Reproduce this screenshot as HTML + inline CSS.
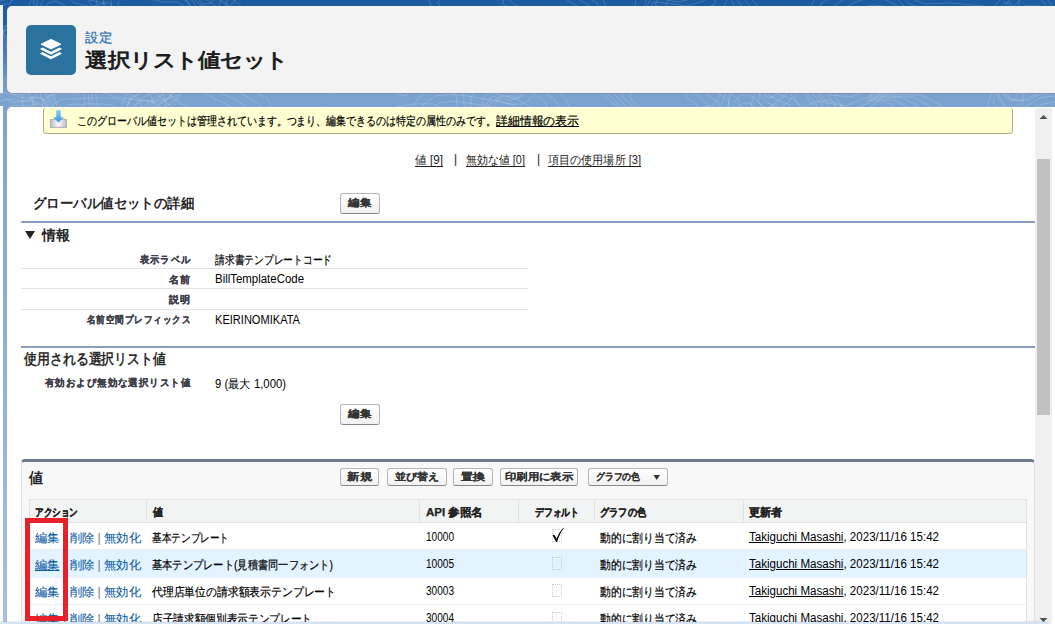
<!DOCTYPE html>
<html><head><meta charset="utf-8">
<style>
*{margin:0;padding:0;box-sizing:border-box}
html,body{width:1055px;height:624px;overflow:hidden}
body{position:relative;font-family:"Liberation Sans",sans-serif;background:linear-gradient(#1c5ca0 0px,#2460a6 25px,#5a89c0 65px,#7ba2cf 93px,#84a9d4 200px,#a9bfdd 624px);color:#000}
.a{position:absolute;white-space:nowrap}
.f{position:absolute;white-space:nowrap;transform-origin:0 0}
#bg2{left:0;top:93px;width:1055px;height:531px;background:linear-gradient(#7ba2cf,#a6bddd)}
#lstrip1{left:0;top:5px;width:3px;height:88px;background:#f3f3f3}
#lstrip2{left:0;top:106px;width:3px;height:518px;background:#fff}
#header{left:7px;top:6px;width:1060px;height:87px;background:#f3f3f3;border-radius:5px;box-shadow:0 1px 0 rgba(120,90,60,.25)}
#icon{left:26px;top:25px;width:50px;height:50px;background:#2b729e;border-radius:5px}
#content{left:7px;top:107px;width:1045px;height:517px;background:#fff;border-radius:5px 0 0 0}
#rstrip{left:1052px;top:107px;width:3px;height:517px;background:#fff}
#scroll{left:1035px;top:108px;width:17px;height:516px;background:#f0f0f0}
#thumb{left:1037px;top:159px;width:13px;height:256px;background:#c1c1c1}
#bstrip{left:0;top:622px;width:1049px;height:3px;background:#d5e3f8;border-radius:0 4px 0 0;box-shadow:0 -1px 0 rgba(0,0,0,.08)}
#msg{left:43px;top:108px;width:970px;height:26px;background:#ffffd1;border:1px solid #aeac85;border-top:none;border-radius:3px 3px 4px 4px}
.u{text-decoration:underline;text-underline-offset:1px}
.td.blue,.blue{color:#0b5aa5;-webkit-text-stroke:0.1px #0b5aa5}
.btn{position:absolute;height:21px;border:1px solid #b5b5b5;border-bottom-color:#888;border-radius:3px;background:linear-gradient(#fff,#f1f1f1)}
.bt{font-size:10px;font-weight:bold;color:#333;-webkit-text-stroke:0.1px #333}
.hline{position:absolute;height:2px;background:#8a9dc0}
.sep{position:absolute;height:1px;background:#e3e3e3}
.lk{font-size:12px;color:#222;text-underline-offset:2px}
.lbl{font-size:10px;font-weight:bold;color:#3e3e4a;letter-spacing:1px;-webkit-text-stroke:0.2px #3e3e4a}
.val{font-size:12px;color:#000;-webkit-text-stroke:0.2px #000}
#panel{left:21px;top:459px;width:1014px;height:170px;background:#f8f8f8;border:1px solid #e0e3e5;border-top:3px solid #6d7a90;border-radius:4px 4px 0 0}
#thead{left:29px;top:499px;width:998px;height:24px;background:#f2f3f3;border:1px solid #e0e3e5}
.th{font-size:11px;font-weight:bold;color:#222;-webkit-text-stroke:0.25px #222}
.colsep{position:absolute;width:1px;background:#e0e3e5}
.row{position:absolute;left:29px;width:998px;background:#fff;border-left:1px solid #e0e3e5;border-right:1px solid #e0e3e5;border-bottom:1px solid #ededed}
.ns{-webkit-text-stroke:0 !important}
.td{font-size:12px;color:#000;-webkit-text-stroke:0.2px currentColor}
.cb{position:absolute;width:10px;height:13px;border:1px dotted #c8c8c8}
#red{left:25px;top:518px;width:43px;height:103px;border:5px solid #e8202a}
</style></head><body>

<svg class="a" style="left:0;top:0" width="1055" height="110"><g fill="none" stroke="#fff" stroke-opacity="0.17" stroke-width="1" stroke-linejoin="round"><path d="M349 73L348 75L345 77L342 77L340 78L339 80L338 83L335 85L331 84L328 83L326 81L322 80L320 78L320 75L323 73L325 71L325 69L324 66L326 64L329 64L332 64L335 64L338 62L342 61L345 62L347 65L347 68L348 70Z"/><path d="M358 73L358 77L353 79L347 80L343 81L342 85L340 91L335 94L329 93L324 89L320 87L314 85L310 82L311 77L315 73L319 70L319 67L318 62L320 58L325 57L330 58L335 58L340 55L347 53L353 55L355 60L355 65L356 69Z"/><path d="M66 32L65 33L66 35L67 38L65 40L61 40L59 39L56 40L53 43L49 44L46 42L45 38L45 36L44 34L43 32L44 29L48 28L51 28L51 27L51 23L53 20L56 19L60 21L62 23L65 23L69 24L71 26L69 29Z"/><path d="M73 32L71 34L73 38L74 43L71 46L65 45L60 44L56 47L51 51L44 52L39 49L38 43L37 39L35 35L33 32L35 28L41 26L47 26L48 23L48 18L51 12L56 10L62 13L66 16L71 17L77 19L81 23L78 28Z"/><path d="M80 32L77 35L80 41L82 47L77 51L68 51L62 50L56 53L48 59L38 61L31 56L30 48L30 42L26 37L23 32L26 26L35 24L43 23L44 20L44 12L48 3L56 1L64 5L70 10L78 11L86 13L91 19L87 26Z"/><path d="M87 32L84 36L87 43L89 52L83 57L72 56L63 55L56 59L46 67L33 69L24 63L22 53L22 45L17 39L13 32L17 25L29 21L39 21L41 16L40 6L46 -5L56 -8L67 -3L74 3L84 5L95 8L101 15L96 25Z"/><path d="M94 32L90 38L94 46L97 56L89 63L75 62L65 60L56 65L44 74L28 78L17 70L14 58L14 48L8 40L3 32L8 23L22 19L34 18L37 13L37 -0L43 -13L56 -17L69 -10L78 -3L90 -0L104 3L111 12L105 23Z"/><path d="M67 120L64 126L58 129L53 132L50 135L45 138L39 136L34 132L32 129L27 131L20 134L14 133L12 129L13 124L13 120L9 116L7 110L11 106L19 105L26 106L30 106L34 104L39 104L42 108L43 112L45 114L52 114L62 115Z"/><path d="M80 120L76 128L67 133L61 137L56 141L49 145L41 142L34 136L30 133L25 136L15 139L5 138L3 132L5 126L4 120L-1 114L-4 106L2 100L13 99L22 101L28 100L34 98L41 98L45 103L46 109L49 111L60 111L73 114Z"/><path d="M93 120L88 130L77 136L68 141L62 147L54 151L43 149L34 141L29 137L22 140L9 145L-3 143L-7 135L-4 127L-4 120L-11 112L-15 102L-8 95L6 93L19 95L27 94L34 91L43 91L48 98L50 106L54 109L67 108L84 112Z"/><path d="M432 139L419 147L414 153L413 162L409 170L398 174L386 172L376 170L367 169L358 168L350 164L345 158L338 153L324 148L308 139L301 126L311 115L332 112L351 115L363 118L369 117L376 115L383 114L393 112L406 110L424 109L439 116L442 127Z"/><path d="M442 139L428 148L421 156L420 166L415 176L402 181L388 179L376 175L365 174L354 173L345 169L339 162L331 156L315 150L296 139L287 123L299 110L323 107L346 110L360 114L368 113L376 110L385 109L396 107L412 104L433 104L451 111L454 125Z"/><path d="M1076 50L1071 53L1067 55L1066 58L1064 61L1060 61L1056 59L1053 57L1051 58L1046 62L1039 64L1035 62L1034 58L1034 54L1033 50L1032 47L1035 44L1041 43L1047 44L1049 44L1050 41L1053 37L1057 36L1061 39L1063 41L1067 42L1073 43L1077 46Z"/><path d="M1088 50L1080 55L1075 58L1072 62L1070 66L1064 67L1057 64L1053 61L1050 63L1042 68L1032 71L1025 68L1023 61L1023 56L1022 50L1021 45L1026 40L1035 39L1044 41L1047 40L1049 36L1053 30L1060 29L1065 32L1068 36L1075 37L1084 39L1090 44Z"/><path d="M1100 50L1090 57L1082 61L1079 66L1075 71L1067 73L1059 69L1053 65L1048 67L1038 74L1025 78L1015 74L1013 65L1013 57L1011 50L1010 43L1016 37L1029 35L1040 38L1045 37L1047 31L1053 23L1062 22L1068 26L1074 31L1082 33L1094 35L1102 42Z"/><path d="M1111 50L1099 58L1089 64L1085 70L1081 77L1071 78L1060 73L1053 68L1047 71L1035 80L1018 85L1005 80L1002 69L1003 59L1001 50L999 41L1007 33L1023 31L1037 34L1043 34L1046 26L1053 16L1064 15L1072 20L1079 26L1090 28L1105 31L1115 39Z"/><path d="M1123 50L1109 60L1097 66L1092 74L1086 82L1075 84L1062 78L1053 72L1046 76L1031 86L1010 92L995 86L992 73L993 61L990 50L988 39L997 30L1016 28L1033 31L1041 30L1045 21L1053 10L1066 7L1076 14L1084 21L1097 24L1115 27L1127 37Z"/><path d="M739 11L743 17L745 25L744 34L739 42L729 46L717 44L707 37L701 31L697 28L690 28L681 28L672 24L667 18L665 11L666 4L670 -3L677 -7L686 -10L693 -12L699 -16L707 -21L717 -22L726 -18L730 -11L731 -3L732 2L735 6Z"/><path d="M747 11L751 19L754 29L753 39L747 49L734 54L719 52L707 43L700 35L694 32L686 32L674 32L664 27L657 20L655 11L656 2L661 -6L670 -11L680 -15L689 -18L697 -23L707 -28L720 -30L730 -25L735 -16L736 -7L737 0L741 5Z"/><path d="M755 11L760 21L763 32L762 45L754 57L739 63L722 60L707 50L699 40L692 36L681 36L668 36L655 31L647 22L644 11L646 0L652 -9L663 -16L675 -20L686 -23L695 -29L707 -36L722 -38L735 -32L741 -21L742 -10L743 -2L748 4Z"/><path d="M762 11L769 22L772 35L771 50L762 64L745 71L724 68L707 56L697 45L689 40L677 40L661 40L647 34L637 24L634 11L636 -1L643 -13L656 -20L670 -25L682 -29L693 -36L707 -44L724 -47L739 -40L746 -26L748 -14L749 -4L755 3Z"/><path d="M524 84L523 91L519 97L511 100L501 99L493 96L490 98L486 106L477 113L468 112L464 105L464 98L463 93L458 89L453 84L454 79L457 74L460 68L462 62L468 56L478 57L486 65L489 73L492 74L500 70L512 68L522 71L525 77Z"/><path d="M535 84L534 93L529 100L519 105L505 103L495 100L491 102L486 112L475 121L463 121L457 111L457 101L456 95L449 91L444 84L444 77L449 71L452 64L455 55L463 48L475 49L486 60L490 70L494 71L504 66L520 63L533 67L537 75Z"/><path d="M1043 73L1045 75L1045 79L1043 81L1039 83L1035 83L1032 84L1029 85L1025 86L1021 85L1018 83L1015 81L1012 79L1011 76L1012 73L1015 70L1018 69L1019 67L1019 63L1021 60L1024 58L1029 58L1033 59L1037 60L1040 62L1042 65L1042 68L1042 70Z"/><path d="M1051 73L1054 77L1054 82L1051 86L1045 88L1039 89L1034 90L1029 93L1022 94L1016 92L1011 89L1007 86L1003 82L1001 77L1003 73L1008 69L1012 67L1013 63L1013 58L1016 52L1022 49L1029 50L1035 51L1041 53L1046 56L1049 60L1049 65L1049 69Z"/><path d="M1058 73L1062 79L1064 86L1059 91L1050 93L1042 94L1036 96L1029 100L1020 101L1012 99L1005 95L1000 90L994 85L992 79L994 73L1001 68L1006 64L1008 60L1008 53L1012 45L1019 41L1029 42L1037 44L1045 47L1052 50L1056 56L1057 62L1056 68Z"/><path d="M184 142L176 147L170 152L165 155L160 158L153 159L148 158L143 161L135 168L122 175L108 175L101 167L102 156L107 148L110 142L113 136L118 133L125 131L129 128L130 122L134 114L143 109L152 110L159 116L165 120L173 123L183 127L188 134Z"/><path d="M195 142L185 149L177 154L171 159L164 162L156 163L149 162L143 165L133 175L117 183L99 183L91 173L92 160L97 149L101 142L105 135L112 130L120 128L125 125L127 117L132 107L143 100L154 102L163 109L170 115L181 118L193 123L199 132Z"/><path d="M205 142L194 150L184 157L177 162L169 167L159 167L150 166L143 170L131 181L111 192L91 192L80 180L82 164L88 151L93 142L98 134L106 128L116 125L122 121L124 112L130 99L143 92L157 94L167 103L176 110L188 113L203 119L211 130Z"/><path d="M216 142L202 152L191 159L183 166L173 171L162 172L151 170L143 175L129 188L106 200L82 200L69 187L71 168L79 153L85 142L90 132L100 126L111 122L118 118L121 107L128 92L143 83L159 86L171 96L181 104L196 109L213 115L222 128Z"/><path d="M893 106L892 112L885 115L880 118L878 123L873 128L866 126L860 120L857 115L852 118L842 123L832 123L831 117L837 110L842 106L839 102L835 97L836 91L843 90L850 90L854 87L860 82L867 80L872 87L870 96L867 101L873 101L885 101Z"/><path d="M906 106L903 114L894 119L887 123L884 130L878 136L868 133L860 125L856 119L849 123L835 129L822 129L821 120L829 111L836 106L832 101L826 93L827 86L837 84L846 84L852 80L860 73L870 71L876 80L873 93L870 100L878 99L894 100Z"/><path d="M918 106L915 116L903 122L895 127L891 136L883 143L870 141L860 130L855 122L846 127L829 135L812 135L810 124L821 113L829 106L825 100L817 90L819 81L831 78L843 79L850 74L860 64L873 62L880 73L877 89L873 98L882 97L903 98Z"/><path d="M930 106L927 118L912 125L902 132L897 142L888 151L872 148L860 134L854 126L844 131L823 142L802 141L800 128L813 114L823 106L817 99L808 87L810 76L825 73L839 73L848 67L860 55L876 52L885 66L881 86L876 96L887 96L913 97Z"/><path d="M942 106L938 120L921 129L909 136L904 149L893 159L874 155L860 139L853 129L841 136L816 148L792 147L789 132L805 115L817 106L810 97L799 83L802 71L819 67L835 67L846 60L860 47L878 43L889 59L884 82L878 94L892 94L922 95Z"/><path d="M783 86L780 87L780 88L781 90L780 92L778 93L776 94L774 96L770 98L766 97L765 94L766 90L766 88L765 87L762 86L762 84L764 82L766 81L767 80L769 78L771 76L774 77L776 78L778 78L782 77L786 78L788 80L787 83Z"/><path d="M790 86L786 88L785 90L786 93L785 96L782 98L778 101L774 105L767 108L761 106L758 101L760 94L761 90L758 88L753 86L752 82L756 79L760 77L763 75L765 72L769 69L774 70L778 72L782 72L789 71L796 72L800 76L797 82Z"/><path d="M797 86L791 89L791 92L792 97L790 101L785 104L780 108L774 113L764 118L755 116L751 107L753 98L755 93L751 90L744 86L743 80L748 76L754 74L758 70L761 65L767 62L774 63L780 65L786 66L795 65L807 65L812 71L807 80Z"/><path d="M1016 76L1018 78L1016 80L1014 80L1013 82L1013 86L1010 89L1007 89L1004 85L1003 82L1002 81L998 81L995 80L996 78L999 76L1000 75L998 73L996 69L997 67L1001 67L1004 68L1007 68L1010 65L1014 65L1015 68L1014 72L1012 74L1013 75Z"/><path d="M1024 76L1027 80L1024 83L1020 84L1018 87L1018 94L1014 100L1007 99L1002 92L1000 86L998 85L991 85L986 84L987 79L993 76L994 74L991 70L987 64L990 60L997 60L1002 62L1007 61L1012 57L1019 56L1022 61L1019 68L1016 73L1018 74Z"/><path d="M1032 76L1037 81L1032 85L1025 88L1023 92L1023 102L1017 111L1007 110L999 100L997 91L994 89L985 89L977 87L979 81L986 76L989 73L983 67L978 59L982 53L992 53L1001 56L1007 54L1015 48L1025 46L1030 54L1025 65L1020 71L1023 73Z"/><path d="M212 27L205 36L194 40L185 44L181 49L178 58L170 65L159 69L147 68L134 66L123 62L116 53L118 43L125 33L129 27L126 22L120 13L118 3L125 -5L136 -8L148 -10L159 -11L170 -10L179 -6L186 1L192 7L200 12L209 19Z"/><path d="M222 27L214 37L201 43L191 47L186 54L181 64L172 73L159 77L144 76L130 74L116 69L108 58L110 45L118 35L123 27L119 21L112 10L111 -2L119 -11L132 -15L146 -17L159 -18L172 -17L183 -12L191 -4L198 3L208 9L219 17Z"/><path d="M233 27L224 39L208 46L196 50L190 58L185 70L174 80L159 85L142 84L125 82L109 75L100 64L102 48L112 36L117 27L113 19L104 7L103 -7L112 -17L128 -22L143 -24L159 -26L174 -25L187 -18L197 -9L205 -1L216 6L229 15Z"/><path d="M243 27L233 40L215 48L201 53L195 62L189 75L176 87L159 93L139 92L120 89L102 82L92 69L94 51L105 37L111 27L106 18L97 4L95 -12L106 -24L123 -29L141 -32L159 -33L176 -32L192 -25L202 -14L211 -5L225 3L239 13Z"/><path d="M254 27L242 42L221 51L206 57L199 67L193 81L179 95L159 101L137 100L115 97L95 89L83 74L86 54L98 38L106 27L100 17L89 2L87 -17L99 -30L119 -36L139 -39L159 -41L179 -39L196 -31L207 -19L218 -9L233 0L249 12Z"/><path d="M524 149L521 158L512 165L501 169L491 171L485 176L478 183L468 191L455 195L441 192L430 186L422 177L419 167L420 157L426 149L430 142L431 135L431 126L435 117L444 110L456 109L468 110L479 112L490 114L501 117L511 123L517 131L522 140Z"/><path d="M534 149L530 160L520 168L506 172L495 175L488 180L480 190L468 199L452 203L436 200L423 192L414 182L410 171L412 159L418 149L424 141L425 133L425 122L429 111L439 103L454 101L468 103L481 105L494 107L507 111L518 118L526 128L531 138Z"/><path d="M544 149L540 162L528 171L512 176L499 179L491 185L482 196L468 206L450 211L431 208L416 199L406 187L401 174L403 160L411 149L417 140L418 131L418 118L423 105L435 96L452 94L468 96L483 99L498 101L513 105L526 114L535 124L541 136Z"/><path d="M553 149L549 163L536 174L518 180L503 183L494 190L484 202L468 214L447 219L426 216L409 206L398 192L392 177L395 162L403 149L410 139L412 128L411 114L417 99L431 89L450 87L468 89L485 92L502 95L519 100L533 109L543 121L550 135Z"/><path d="M524 18L519 24L510 29L506 34L506 43L502 53L491 54L480 46L475 37L470 35L460 38L447 38L442 32L444 24L446 18L442 11L438 2L443 -5L457 -5L468 -2L474 -3L480 -10L491 -17L500 -14L504 -5L503 4L508 7L518 11Z"/><path d="M534 18L529 26L518 32L513 38L513 49L507 61L494 63L480 53L473 41L467 39L455 42L440 43L433 35L436 26L438 18L432 9L428 -2L434 -10L451 -11L465 -6L473 -7L480 -17L493 -25L505 -22L509 -10L509 0L515 5L527 10Z"/><path d="M100 70L99 76L89 79L82 81L83 88L85 103L78 114L65 113L56 101L52 90L46 88L35 89L26 85L29 77L37 70L38 66L32 58L29 48L38 44L51 48L59 52L65 46L75 35L90 31L98 39L95 52L90 61L94 65Z"/><path d="M109 70L107 78L95 81L86 83L88 92L90 110L81 125L65 123L54 108L49 95L42 92L27 93L17 88L20 78L30 70L32 64L24 55L20 43L31 38L47 42L58 47L65 40L78 26L96 21L105 31L102 48L96 59L101 64Z"/><path d="M117 70L115 79L101 84L90 86L92 97L95 118L84 136L65 134L51 115L46 100L37 97L20 98L8 91L12 80L24 70L25 63L15 52L12 38L24 31L44 37L57 42L65 34L80 18L102 11L113 23L109 43L103 56L107 63Z"/><path d="M126 70L124 81L107 86L95 89L97 101L100 126L87 147L65 144L49 123L43 105L33 101L13 102L-2 95L3 81L17 70L19 62L7 49L3 32L18 25L41 32L55 38L65 28L83 9L108 2L121 16L116 39L109 54L114 62Z"/><path d="M113 118L106 121L101 123L101 125L101 129L99 134L95 137L89 138L83 139L77 137L73 133L73 128L74 123L73 121L68 118L64 114L63 109L68 105L75 104L81 105L85 104L89 104L93 104L98 104L104 104L111 105L117 108L118 113Z"/><path d="M123 118L112 122L106 124L105 128L106 134L103 140L97 145L89 147L80 147L72 145L67 139L67 132L68 126L67 122L60 118L53 112L53 105L60 100L69 99L77 99L83 98L89 98L95 98L101 98L109 98L120 99L129 103L130 111Z"/><path d="M133 118L119 123L111 126L110 131L110 139L107 147L99 152L89 155L78 155L67 153L61 145L60 136L63 128L61 123L52 118L43 110L42 101L51 95L63 93L74 94L81 93L89 92L97 92L105 93L115 93L129 94L140 99L142 109Z"/><path d="M142 118L126 125L116 128L114 134L115 143L111 153L101 160L89 163L75 164L62 160L54 152L54 140L57 130L54 124L44 118L33 108L32 97L43 90L58 88L70 88L80 87L89 86L98 86L109 87L121 87L138 88L151 95L154 107Z"/><path d="M152 118L133 126L121 130L119 137L120 148L115 160L104 168L89 171L73 172L58 168L48 158L47 144L51 132L48 125L35 118L23 106L22 93L34 85L52 82L67 83L78 82L89 80L100 80L112 81L127 81L146 83L163 91L166 105Z"/><path d="M1017 21L1018 24L1013 26L1008 26L1006 27L1005 31L1003 34L999 34L996 31L993 30L987 32L980 33L975 30L978 24L986 21L990 19L990 17L989 14L990 12L993 12L996 11L999 8L1004 3L1010 3L1013 7L1011 13L1010 17L1012 18Z"/><path d="M1027 21L1028 26L1021 29L1013 29L1009 31L1009 36L1005 41L999 41L994 37L989 36L981 38L969 39L962 34L967 26L978 21L986 18L985 16L983 11L985 8L990 7L995 6L999 1L1007 -6L1016 -7L1020 -0L1018 9L1016 15L1020 17Z"/><path d="M775 127L779 132L783 140L781 146L772 148L761 145L754 140L750 139L746 142L740 144L734 143L729 140L723 137L717 133L714 127L719 122L728 119L735 118L737 115L738 108L743 103L750 103L756 108L760 112L764 114L769 116L772 119L773 123Z"/><path d="M783 127L789 134L795 144L792 153L779 156L765 151L755 145L750 144L744 147L736 149L729 148L722 144L714 141L706 135L702 127L709 120L721 116L730 115L732 110L734 102L741 95L750 95L758 101L763 107L769 109L776 112L780 116L781 122Z"/><path d="M791 127L799 136L806 148L803 159L787 163L768 157L757 149L750 148L743 152L733 155L723 153L715 149L705 144L694 137L690 127L698 118L713 114L725 112L728 106L730 95L738 87L750 87L760 95L766 102L773 105L782 108L788 113L789 121Z"/><path d="M800 127L809 138L817 152L813 166L794 170L772 162L758 153L750 152L741 157L729 161L718 158L708 153L696 147L683 139L678 127L687 116L706 111L719 108L723 101L726 89L736 79L750 79L762 88L770 96L778 100L788 104L795 111L797 119Z"/><path d="M808 127L819 139L829 156L824 172L802 177L776 168L759 158L750 156L740 162L726 166L713 164L701 157L687 151L672 141L666 127L677 114L698 108L714 105L719 97L722 82L733 70L750 71L764 81L773 91L783 96L795 100L803 108L805 118Z"/><path d="M399 52L401 54L401 56L399 57L399 59L398 62L395 64L392 63L390 60L389 57L387 57L383 58L380 57L381 54L384 52L386 51L385 50L384 47L385 45L387 45L390 45L392 43L395 40L399 40L401 44L398 48L396 51L396 51Z"/><path d="M406 52L410 55L408 58L406 61L405 65L403 71L399 75L392 73L388 66L386 62L382 61L375 63L370 60L371 56L378 52L381 50L379 48L377 43L379 40L383 39L388 38L392 34L399 29L406 30L408 36L404 45L399 50L400 51Z"/><path d="M412 52L418 57L416 61L412 65L411 70L409 79L402 85L392 82L386 73L383 66L378 66L367 67L359 64L362 57L371 52L376 49L373 45L370 39L373 34L379 33L386 31L392 26L402 19L413 19L416 29L409 42L402 48L404 50Z"/><path d="M419 52L426 58L424 64L418 69L417 76L414 88L405 96L392 92L384 79L381 70L373 70L359 72L349 68L352 59L365 52L371 49L368 43L363 35L367 28L376 26L384 25L392 17L405 8L419 9L423 22L415 38L405 47L407 50Z"/><path d="M1074 57L1065 61L1068 67L1074 77L1071 86L1059 87L1048 84L1040 85L1030 91L1017 93L1012 84L1017 71L1021 63L1013 61L996 57L988 47L995 40L1009 38L1019 36L1023 29L1030 21L1040 22L1048 31L1052 38L1060 37L1076 34L1090 38L1087 48Z"/><path d="M1082 57L1070 62L1074 69L1082 82L1078 93L1063 94L1050 90L1040 92L1027 99L1012 101L1005 90L1011 74L1017 65L1007 62L987 57L976 45L985 36L1003 34L1014 31L1019 22L1027 13L1040 14L1049 25L1054 34L1065 33L1085 29L1101 34L1098 46Z"/><path d="M1089 57L1076 63L1081 72L1089 87L1084 99L1068 101L1052 96L1040 98L1025 107L1007 109L999 96L1006 77L1013 67L1001 63L977 57L964 43L975 32L996 29L1009 26L1015 16L1025 5L1040 6L1051 19L1057 30L1069 28L1093 24L1112 30L1109 44Z"/><path d="M1097 57L1082 64L1087 74L1097 92L1091 106L1072 107L1054 102L1040 105L1023 115L1002 118L993 102L1001 81L1008 68L995 64L967 57L952 41L965 29L989 25L1004 22L1011 10L1022 -3L1040 -2L1053 14L1059 25L1074 24L1101 19L1123 26L1120 43Z"/><path d="M1105 57L1087 65L1094 76L1105 96L1098 113L1076 114L1055 108L1040 111L1020 123L997 126L986 108L996 84L1004 70L989 66L957 57L940 39L954 25L982 21L999 17L1007 3L1020 -11L1040 -10L1054 8L1062 21L1078 19L1109 14L1135 21L1131 41Z"/><path d="M696 -23L699 -12L694 -2L679 2L661 -1L651 -2L647 6L638 20L624 26L611 20L606 8L603 -1L594 -6L583 -13L581 -23L588 -32L596 -39L597 -48L599 -60L610 -68L626 -63L638 -52L645 -45L654 -48L671 -54L687 -53L695 -44L695 -33Z"/><path d="M706 -23L709 -10L704 1L686 6L665 3L654 2L648 11L638 27L621 35L607 27L601 13L597 3L586 -3L573 -12L571 -23L580 -33L588 -41L590 -52L593 -67L605 -76L624 -70L638 -57L646 -49L657 -53L677 -60L696 -58L705 -48L705 -35Z"/><path d="M716 -23L720 -9L714 5L693 11L669 7L656 6L650 16L638 34L619 43L602 35L595 18L590 6L578 -1L564 -10L561 -23L571 -35L581 -44L583 -57L586 -73L600 -83L622 -77L638 -62L647 -53L660 -57L682 -65L705 -64L715 -51L715 -36Z"/><path d="M727 -23L730 -7L723 9L700 15L673 11L658 9L651 21L638 42L616 52L597 42L590 24L584 10L570 2L554 -8L551 -23L562 -36L573 -47L576 -61L579 -80L595 -91L620 -85L638 -67L648 -56L662 -62L688 -71L713 -69L725 -55L725 -38Z"/><path d="M547 106L546 110L543 114L540 117L537 120L533 122L527 120L523 117L521 114L518 114L513 116L506 116L501 114L497 111L496 106L496 102L499 97L505 96L513 96L518 98L520 97L523 95L527 92L532 92L535 94L538 97L542 99L545 102Z"/><path d="M558 106L556 112L552 117L548 122L544 126L537 129L529 127L523 121L519 117L516 117L509 120L499 121L491 118L486 113L483 106L483 99L488 93L497 91L508 92L515 94L519 93L523 89L529 86L536 86L541 89L545 93L550 96L556 101Z"/><path d="M569 106L566 114L561 120L556 127L550 133L541 136L531 133L523 126L518 121L514 121L504 124L492 125L481 122L474 115L471 106L471 97L477 89L490 86L503 87L513 90L518 89L523 84L531 80L540 80L546 84L552 88L559 93L566 99Z"/><path d="M37 13L36 16L36 19L36 24L36 30L31 33L24 31L18 25L15 22L11 24L3 27L-3 26L-5 21L-2 16L-0 13L-0 9L1 6L4 4L9 4L11 2L13 -4L18 -11L26 -13L31 -7L31 1L29 6L30 8L34 10Z"/><path d="M45 13L44 17L43 22L44 29L44 37L36 42L26 38L18 31L14 26L8 29L-3 33L-13 31L-15 25L-11 18L-8 13L-8 8L-7 3L-1 1L5 -0L8 -3L11 -12L18 -21L29 -24L36 -16L36 -5L33 3L36 6L41 8Z"/><path d="M956 43L943 53L927 59L914 61L905 63L898 65L892 68L884 74L873 83L856 89L839 87L832 75L836 61L843 50L845 43L841 35L839 26L844 18L852 12L862 8L873 5L884 6L894 11L900 17L908 20L923 20L942 22L957 30Z"/><path d="M970 43L954 55L934 61L919 64L909 67L901 69L893 72L884 79L871 90L850 97L831 95L823 81L828 64L836 51L838 43L833 34L831 23L836 13L847 6L858 1L871 -2L884 -1L896 5L903 13L912 16L930 15L953 18L970 28Z"/><path d="M983 43L965 57L942 64L925 68L913 70L903 73L895 77L884 85L868 97L845 106L823 102L813 87L819 67L828 53L831 43L825 33L823 20L829 9L841 1L854 -5L869 -9L884 -8L897 -1L906 8L917 12L936 11L963 14L983 26Z"/><path d="M996 43L975 59L950 67L930 71L917 74L906 77L896 82L884 91L866 104L840 114L815 110L804 92L810 70L821 54L823 43L818 31L815 17L821 4L835 -5L850 -12L867 -16L884 -15L899 -6L909 4L921 8L943 7L974 10L996 23Z"/><path d="M1009 43L986 61L957 70L935 74L920 78L908 81L897 86L884 96L864 112L835 123L806 118L794 98L801 74L814 55L816 43L810 30L807 14L814 -0L829 -10L846 -18L865 -23L884 -22L901 -12L912 -1L925 4L950 3L984 6L1009 21Z"/><path d="M844 138L839 144L832 148L826 151L823 156L819 162L813 168L804 170L796 168L788 165L779 162L771 158L766 152L766 145L768 138L770 132L772 126L776 121L783 118L791 117L798 116L804 113L813 109L824 108L833 111L839 117L843 124L845 131Z"/><path d="M853 138L847 146L838 151L831 154L827 160L823 168L815 175L804 177L793 175L783 172L773 168L763 163L757 156L756 147L759 138L761 131L764 123L769 116L778 113L788 112L796 111L804 107L815 102L828 100L840 104L847 112L852 121L855 129Z"/><path d="M699 112L691 116L680 118L676 119L679 126L680 137L674 145L664 144L656 139L650 134L643 132L638 128L639 121L645 115L646 112L640 107L631 100L631 92L640 89L651 92L658 93L664 89L672 85L680 86L685 92L687 98L692 101L698 106Z"/><path d="M710 112L699 118L685 120L680 121L684 131L685 145L677 155L664 154L654 147L646 141L637 138L630 132L632 124L639 116L641 112L632 106L622 96L621 86L634 82L648 86L657 87L664 83L674 77L685 78L691 86L694 93L700 98L708 104Z"/><path d="M720 112L707 119L690 121L684 124L688 135L690 153L680 165L664 163L651 155L641 148L631 144L623 137L625 126L633 117L636 112L625 105L612 92L612 80L627 76L644 80L655 82L664 76L677 69L690 71L697 80L700 89L708 95L718 102Z"/><path d="M730 112L715 121L695 123L687 126L692 139L694 160L683 174L664 173L649 162L637 154L625 149L615 142L617 129L628 118L631 112L618 104L602 89L602 74L620 69L640 74L654 76L664 70L679 62L694 63L703 74L707 85L716 92L728 100Z"/><path d="M741 112L723 122L699 125L691 128L697 143L699 168L685 184L664 183L647 170L633 161L619 155L608 146L610 132L622 119L626 112L611 102L593 85L593 68L613 63L637 68L652 71L664 63L681 54L699 56L709 68L714 81L724 89L738 99Z"/><path d="M234 130L219 136L207 139L203 142L203 149L201 158L194 166L183 171L170 176L153 178L139 172L135 160L142 146L151 136L153 130L150 124L147 117L150 110L157 105L165 100L173 94L183 89L196 89L206 94L215 99L226 104L237 110L242 120Z"/><path d="M244 130L226 138L212 141L207 144L207 153L204 163L196 172L183 179L167 185L148 187L131 181L126 165L134 149L144 137L148 130L143 123L140 114L144 106L152 100L161 95L171 87L183 81L198 81L211 86L221 93L234 99L247 107L253 118Z"/><path d="M254 130L233 139L216 142L210 147L211 156L208 169L198 179L183 187L164 194L142 197L123 189L117 171L126 151L138 138L142 130L136 122L133 111L137 102L147 95L158 89L168 80L183 73L200 73L215 79L228 88L242 94L258 103L264 116Z"/><path d="M264 130L240 140L221 144L214 149L214 160L211 174L200 186L183 195L162 203L136 206L114 197L108 177L118 154L132 139L136 130L130 121L126 109L131 98L142 91L154 83L166 73L183 65L203 64L220 72L234 82L250 89L268 99L275 114Z"/><path d="M159 99L148 106L148 113L154 126L153 140L138 142L120 130L111 117L105 118L91 129L72 136L60 130L59 118L59 108L53 99L49 88L60 80L82 81L98 86L100 82L100 64L111 48L126 47L135 61L137 73L144 78L158 81L166 89Z"/><path d="M168 99L156 107L154 115L162 131L161 147L143 150L121 136L111 121L104 122L88 135L65 143L51 136L50 121L50 110L42 99L38 86L51 77L77 78L95 84L98 79L98 58L111 38L129 38L139 53L142 69L151 74L167 78L176 87Z"/><path d="M177 99L163 108L161 118L170 136L169 155L148 158L123 141L111 124L103 125L84 141L58 150L42 141L40 125L40 111L31 99L26 84L41 73L71 75L93 82L96 75L96 51L111 29L132 28L143 46L147 64L157 70L175 75L186 86Z"/><path d="M230 -22L230 -17L225 -14L220 -12L217 -8L215 -2L210 4L203 4L197 -2L194 -8L190 -10L183 -10L175 -12L171 -17L173 -22L175 -27L176 -32L178 -37L185 -40L193 -38L199 -35L203 -37L209 -42L218 -46L225 -44L228 -38L227 -31L228 -27Z"/><path d="M239 -22L239 -16L233 -11L226 -8L222 -4L220 4L213 12L203 12L195 5L191 -3L186 -6L176 -6L166 -9L161 -15L163 -22L166 -29L167 -35L170 -42L179 -46L190 -43L198 -40L203 -41L211 -49L223 -54L233 -51L236 -43L235 -34L236 -28Z"/><path d="M248 -22L248 -14L240 -8L231 -5L227 1L224 11L216 21L203 21L193 12L188 2L182 -2L170 -2L156 -5L151 -13L153 -22L157 -30L159 -39L162 -47L173 -51L186 -48L196 -44L203 -46L213 -55L228 -62L240 -59L244 -48L243 -37L245 -30Z"/><path d="M258 -22L257 -13L248 -6L237 -1L231 5L228 18L218 29L203 30L191 19L185 7L178 2L163 2L147 -2L140 -11L144 -22L148 -32L150 -42L154 -52L166 -57L183 -54L195 -48L203 -51L214 -62L232 -70L248 -66L253 -53L251 -40L253 -31Z"/></g></svg>
<div class="a" id="lstrip1"></div>
<div class="a" id="lstrip2"></div>
<div class="a" id="header"></div>
<div class="a" id="icon"><svg width="50" height="50" viewBox="0 0 50 50"><g fill="#fff" stroke="#fff" stroke-width="0.8" stroke-linejoin="round"><path d="M25 14.3 L35 19.2 L25 24.1 L15 19.2 Z"/><path d="M14.6 24 L16.6 23 L25 27.2 L33.4 23 L35.4 24 L25 29.3 Z"/><path d="M14.6 28.6 L16.6 27.6 L25 31.8 L33.4 27.6 L35.4 28.6 L25 33.9 Z"/></g></svg></div>
<div class="f" style="left:85px;top:29px;font-size:13px;color:#1f6bb0;-webkit-text-stroke:0.2px #1f6bb0;--w:27">設定</div>
<div class="f" style="left:85px;top:47px;font-size:20px;color:#1b1b1b;-webkit-text-stroke:0.9px #1b1b1b;--w:203">選択リスト値セット</div>
<div class="a" id="content"></div>
<div class="a" id="rstrip"></div>
<div class="a" id="scroll"></div>
<svg class="a" style="left:1039px;top:114px" width="9" height="6"><path d="M0.5 5 L4.5 1 L8.5 5 Z" fill="#505050"/></svg>
<svg class="a" style="left:1039px;top:617px" width="9" height="6"><path d="M0.5 1 L4.5 5 L8.5 1 Z" fill="#505050"/></svg>
<div class="a" id="thumb"></div>

<div class="a" id="msg"></div>
<svg class="a" style="left:49px;top:109px" width="19" height="20" viewBox="0 0 19 20"><defs><linearGradient id="tg" x1="0" x2="1" y1="0" y2="0"><stop offset="0" stop-color="#bdbdc2"/><stop offset="0.5" stop-color="#fbfbfd"/><stop offset="1" stop-color="#bdbdc2"/></linearGradient><linearGradient id="ag" x1="0" x2="0" y1="0" y2="1"><stop offset="0" stop-color="#8fd0f5"/><stop offset="1" stop-color="#3597dd"/></linearGradient></defs><rect x="1.5" y="10.4" width="16" height="8" fill="url(#tg)" stroke="#aeaeb6" stroke-width="1"/><path d="M7.2 1.1 H11.8 V8.2 H14.9 L9.5 13.4 L4.1 8.2 H7.2 Z" fill="url(#ag)"/></svg>
<div class="f val" style="left:77px;top:113px;--w:419">このグローバル値セットは管理されています。つまり、編集できるのは特定の属性のみです。</div>
<div class="f val u" style="left:496px;top:113px;--w:83">詳細情報の表示</div>

<div class="f lk u" style="left:415px;top:152px;--w:28">値 [9]</div>
<div class="f lk" style="left:454px;top:152px">|</div>
<div class="f lk u" style="left:466px;top:152px;--w:59">無効な値 [0]</div>
<div class="f lk" style="left:537px;top:152px">|</div>
<div class="f lk u" style="left:548px;top:152px;--w:93">項目の使用場所 [3]</div>

<div class="f" style="left:33px;top:195px;font-size:14px;font-weight:bold;color:#262626;--w:161">グローバル値セットの詳細</div>
<div class="btn" style="left:340px;top:193px;width:40px"></div>
<div class="f bt" style="left:348px;top:196px;--w:23">編集</div>
<div class="hline" style="left:21px;top:221px;width:1014px"></div>
<svg class="a" style="left:25px;top:231px" width="11" height="9"><path d="M0 0 L10 0 L5 8 Z" fill="#222"/></svg>
<div class="f" style="left:42px;top:227px;font-size:14px;font-weight:bold;color:#262626;--w:28">情報</div>

<div class="f lbl" style="left:140px;top:253px;--w:51">表示ラベル</div>
<div class="f val" style="left:215px;top:252px;--w:117">請求書テンプレートコード</div>
<div class="sep" style="left:21px;top:268px;width:507px"></div>
<div class="f lbl" style="left:169px;top:273px;--w:22">名前</div>
<div class="f val ns" style="left:215px;top:272px;--w:89">BillTemplateCode</div>
<div class="sep" style="left:21px;top:288px;width:507px"></div>
<div class="f lbl" style="left:169px;top:293px;--w:22">説明</div>
<div class="sep" style="left:21px;top:309px;width:507px"></div>
<div class="f lbl" style="left:87px;top:313px;--w:104">名前空間プレフィックス</div>
<div class="f val ns" style="left:215px;top:313px;--w:85">KEIRINOMIKATA</div>

<div class="hline" style="left:21px;top:346px;width:1014px"></div>
<div class="f" style="left:24px;top:350px;font-size:15px;color:#222;-webkit-text-stroke:0.5px #222;--w:142">使用される選択リスト値</div>
<div class="f lbl" style="left:45px;top:376px;--w:146">有効および無効な選択リスト値</div>
<div class="f val ns" style="left:215px;top:376px;--w:71">9 (最大 1,000)</div>
<div class="btn" style="left:340px;top:404px;width:40px"></div>
<div class="f bt" style="left:348px;top:407px;--w:23">編集</div>

<div class="a" id="panel"></div>
<div class="f" style="left:29px;top:469px;font-size:15px;font-weight:bold;color:#222;--w:14">値</div>
<div class="btn" style="left:340px;top:468px;width:39px;height:18px"></div>
<div class="f bt" style="left:347px;top:470px;--w:25">新規</div>
<div class="btn" style="left:387px;top:468px;width:60px;height:18px"></div>
<div class="f bt" style="left:395px;top:470px;--w:44">並び替え</div>
<div class="btn" style="left:453px;top:468px;width:40px;height:18px"></div>
<div class="f bt" style="left:461px;top:470px;--w:24">置換</div>
<div class="btn" style="left:500px;top:468px;width:78px;height:18px"></div>
<div class="f bt" style="left:505px;top:470px;--w:68">印刷用に表示</div>
<div class="btn" style="left:588px;top:468px;width:80px;height:18px"></div>
<div class="f bt" style="left:596px;top:470px;--w:44">グラフの色</div>
<svg class="a" style="left:653px;top:475px" width="8" height="6"><path d="M0.5 0 L7 0 L3.75 5 Z" fill="#333"/></svg>

<div class="a" id="thead"></div>
<div class="colsep" style="left:146px;top:500px;height:22px"></div>
<div class="colsep" style="left:419px;top:500px;height:22px"></div>
<div class="colsep" style="left:518px;top:500px;height:22px"></div>
<div class="colsep" style="left:594px;top:500px;height:22px"></div>
<div class="colsep" style="left:743px;top:500px;height:22px"></div>
<div class="f th" style="left:35px;top:505px;--w:43">アクション</div>
<div class="f th" style="left:153px;top:505px;--w:10">値</div>
<div class="f th" style="left:426px;top:505px;--w:57">API 参照名</div>
<div class="f th" style="left:535px;top:505px;--w:44">デフォルト</div>
<div class="f th" style="left:600px;top:505px;--w:46">グラフの色</div>
<div class="f th" style="left:749px;top:505px;--w:33">更新者</div>

<div class="row" style="top:523px;height:27px"></div>
<div class="row" style="top:550px;height:28px;background:#e3f3ff"></div>
<div class="row" style="top:578px;height:27px"></div>
<div class="row" style="top:605px;height:27px"></div>

<div class="f td blue" style="left:35px;top:530px;--w:106">編集 <span style="color:#777;-webkit-text-stroke:0">|</span> 削除 <span style="color:#777;-webkit-text-stroke:0">|</span> 無効化</div>
<div class="f td" style="left:152px;top:530px;--w:77">基本テンプレート</div>
<div class="f td ns" style="left:426px;top:530px;--w:28">10000</div>
<div class="cb" style="left:552px;top:529px"></div>
<svg class="a" style="left:552px;top:527px" width="12" height="16" viewBox="0 0 12 16"><path d="M0.5 8.5 L2.2 7.6 L4.6 11.6 Q7 5 11.5 0.5 L11.8 1.2 Q8 6 5 15 L4.2 15 Z" fill="#111"/></svg>
<div class="f td" style="left:600px;top:530px;--w:97">動的に割り当て済み</div>
<div class="f td ns" style="left:749px;top:530px;--w:190"><span class="u">Takiguchi Masashi</span>, 2023/11/16 15:42</div>

<div class="f td blue" style="left:35px;top:557px;--w:106"><span class="u">編集</span> <span style="color:#777;-webkit-text-stroke:0">|</span> 削除 <span style="color:#777;-webkit-text-stroke:0">|</span> 無効化</div>
<div class="f td" style="left:152px;top:557px;--w:181">基本テンプレート(見積書同一フォント)</div>
<div class="f td ns" style="left:426px;top:557px;--w:28">10005</div>
<div class="cb" style="left:552px;top:557px"></div>
<div class="f td" style="left:600px;top:557px;--w:97">動的に割り当て済み</div>
<div class="f td ns" style="left:749px;top:557px;--w:190"><span class="u">Takiguchi Masashi</span>, 2023/11/16 15:42</div>

<div class="f td blue" style="left:35px;top:584px;--w:106">編集 <span style="color:#777;-webkit-text-stroke:0">|</span> 削除 <span style="color:#777;-webkit-text-stroke:0">|</span> 無効化</div>
<div class="f td" style="left:152px;top:584px;--w:184">代理店単位の請求額表示テンプレート</div>
<div class="f td ns" style="left:426px;top:584px;--w:28">30003</div>
<div class="cb" style="left:552px;top:584px"></div>
<div class="f td" style="left:600px;top:584px;--w:97">動的に割り当て済み</div>
<div class="f td ns" style="left:749px;top:584px;--w:190"><span class="u">Takiguchi Masashi</span>, 2023/11/16 15:42</div>

<div class="f td blue" style="left:35px;top:611px;--w:106">編集 <span style="color:#777;-webkit-text-stroke:0">|</span> 削除 <span style="color:#777;-webkit-text-stroke:0">|</span> 無効化</div>
<div class="f td" style="left:152px;top:611px;--w:160">店子請求額個別表示テンプレート</div>
<div class="f td ns" style="left:426px;top:611px;--w:28">30004</div>
<div class="cb" style="left:552px;top:612px"></div>
<div class="f td" style="left:600px;top:611px;--w:97">動的に割り当て済み</div>
<div class="f td ns" style="left:749px;top:611px;--w:190"><span class="u">Takiguchi Masashi</span>, 2023/11/16 15:42</div>

<div class="a" id="red"></div>
<div class="a" id="bstrip"></div>
<script>
(function(){
  var els=document.querySelectorAll('.f');
  for(var i=0;i<els.length;i++){
    var e=els[i];
    var w=parseFloat(getComputedStyle(e).getPropertyValue('--w'));
    if(!w) continue;
    var nw=e.getBoundingClientRect().width;
    if(nw>0) e.style.transform='scaleX('+(w/nw)+')';
  }
})();
</script>
</body></html>
